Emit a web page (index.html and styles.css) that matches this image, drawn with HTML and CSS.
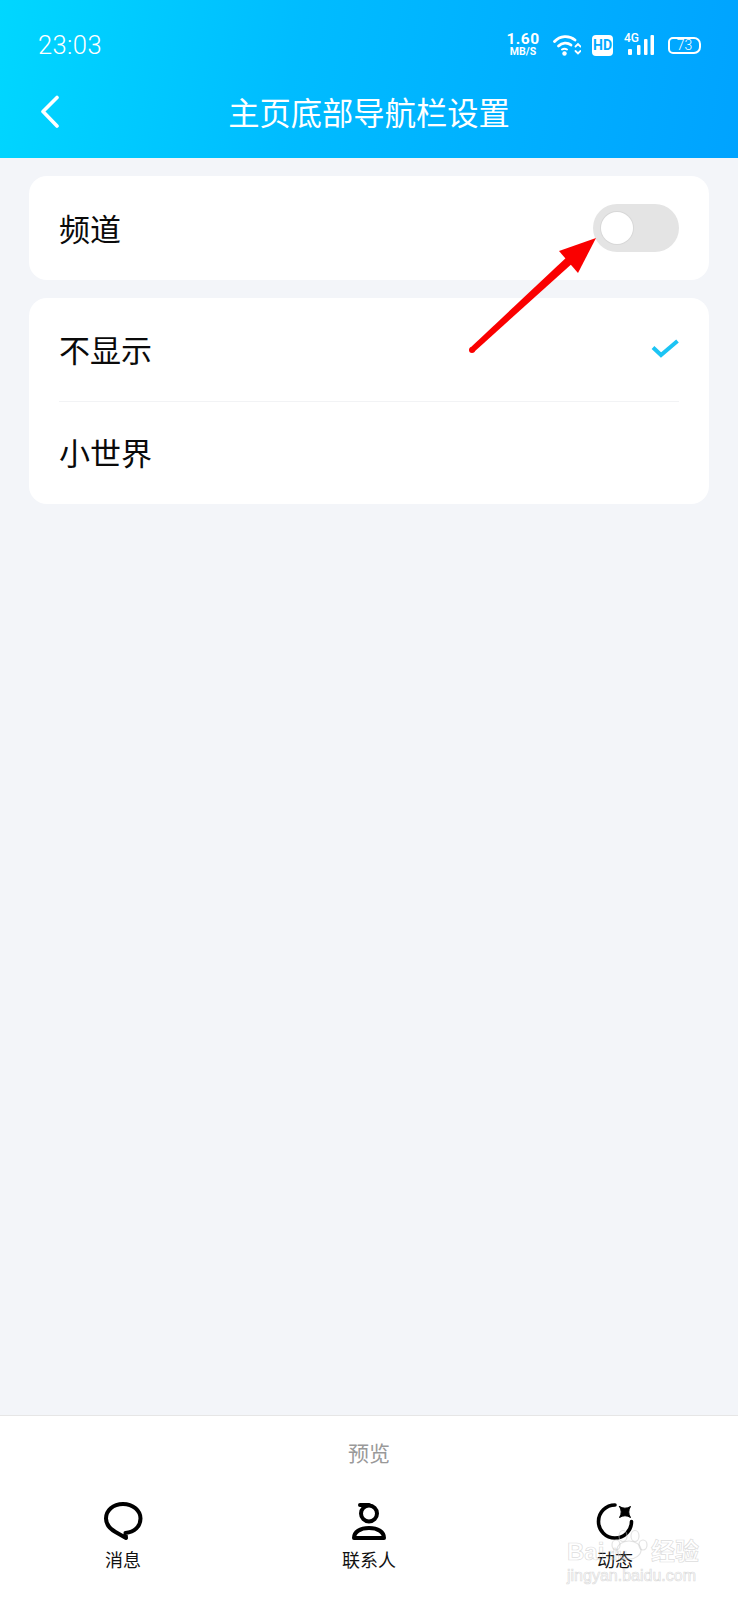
FILE: index.html
```html
<!DOCTYPE html>
<html lang="zh">
<head>
<meta charset="utf-8">
<title>主页底部导航栏设置</title>
<link rel="stylesheet" href="styles.css">
</head>
<body>
<div class="page">
  <header class="top">
    <div class="status">
      <span class="time">23:03</span>
      <div class="status-icons">
        <div class="speed"><span class="speed-num">1.60</span><span class="speed-unit">MB/S</span></div>
        <svg class="wifi" width="28" height="22" viewBox="0 0 28 22" fill="none" stroke="#fff" stroke-width="2.800" stroke-linecap="round"><path d="M1.500 7.500C7 1.500 16 1 22 6"/><path d="M5.500 12C9 8.500 14.500 8 18 11"/><path d="M9 15.500c1.500-1 3.500-1 5 0" stroke-width="2"/><circle cx="11.500" cy="19.500" r="2.200" fill="#fff" stroke="none"/><path d="M22.500 12.500l2.500-2.500 2.500 2.500M22.500 17l2.500 2.500 2.500-2.500" stroke-width="1.800"/></svg>
        <span class="hd">HD</span>
        <div class="signal">
          <span class="net">4G</span>
          <svg width="30" height="22" viewBox="0 0 30 22" fill="#fff"><rect x="4" y="15" width="4" height="6" rx="1"/><rect x="13" y="11" width="3.500" height="10" rx="1"/><rect x="20" y="5" width="3.500" height="16" rx="1"/><rect x="26.500" y="1" width="3.500" height="20" rx="1"/></svg>
        </div>
        <div class="battery"><span class="battery-num">73</span></div>
      </div>
    </div>
    <div class="nav">
      <svg class="back" width="24" height="34" viewBox="0 0 24 34" fill="none" stroke="#fff" stroke-width="3.600" stroke-linecap="round" stroke-linejoin="round"><path d="M19 2.500 5 16.500 19 31"/></svg>
      <h1 class="title">主页底部导航栏设置</h1>
    </div>
  </header>

  <main class="content">
    <section class="card">
      <div class="row row-first">
        <span class="label">频道</span>
        <span class="toggle"><span class="thumb"></span></span>
      </div>
    </section>
    <section class="card">
      <div class="row row-line">
        <span class="label">不显示</span>
        <svg class="check" width="30" height="20" viewBox="0 0 30 20" fill="none" stroke="#1cc4f4" stroke-width="4"><path d="M4 8.500 12 16 28.500 2"/></svg>
      </div>
      <div class="row row-last">
        <span class="label">小世界</span>
      </div>
    </section>
  </main>

  <footer class="bottom">
    <div class="preview">预览</div>
    <div class="tabs">
      <div class="tab">
        <svg width="42" height="40" viewBox="0 0 42 40" fill="none" stroke="#000" stroke-width="4" stroke-linejoin="round" stroke-linecap="round"><path d="M21 3C11 3 4 9.500 4 17.500c0 7 5 11 9.500 13.500l10.500 6-.5-5C32.500 31 38.500 25.500 38.500 17.500 38.500 9.500 31 3 21 3Z"/></svg>
        <span class="tab-label">消息</span>
      </div>
      <div class="tab">
        <svg width="36" height="40" viewBox="0 0 36 40" fill="none" stroke="#000" stroke-width="4"><path d="M9 4h9" stroke-linecap="round"/><circle cx="18" cy="12.500" r="8"/><path d="M3 37c0-6 6-10 15-10s15 4 15 10Z" stroke-linejoin="round"/></svg>
        <span class="tab-label">联系人</span>
      </div>
      <div class="tab">
        <svg width="40" height="40" viewBox="0 0 40 40" fill="none" stroke="#000" stroke-linecap="round"><path d="M20 4A16.500 16.500 0 1 0 36.500 20.500" stroke-width="3.600"/><path d="M24.500 5.500Q30 9 35.500 5.500 32 11 35.500 16.500 30 13 24.500 16.500 28 11 24.500 5.500Z" fill="#000" stroke-width="1" stroke-linejoin="round"/></svg>
        <span class="tab-label">动态</span>
      </div>
    </div>
    <div class="watermark">
      <svg class="paw" width="44" height="32" viewBox="0 0 44 32" fill="none" stroke="#c8c8c8" stroke-opacity=".5" stroke-width="1.200"><ellipse cx="22" cy="21" rx="12" ry="9"/><ellipse cx="9" cy="16" rx="4" ry="5"/><ellipse cx="16" cy="7" rx="4" ry="5.500"/><ellipse cx="28" cy="7" rx="4" ry="5.500"/><ellipse cx="36" cy="16" rx="4" ry="5"/></svg>
      <div class="wm-main"><span class="wm-bai">Bai<span class="wm-du">du</span></span><span>经验</span></div>
      <div class="wm-url">jingyan.baidu.com</div>
    </div>
  </footer>

  <svg class="arrow" width="738" height="400" viewBox="0 0 738 400"><circle cx="472" cy="350" r="3" fill="#fa0000"/><path d="M470 348 569 255 575 261 474 352Z" fill="#fa0000"/><path d="M596 238 559 251 578 273Z" fill="#fa0000"/></svg>
</div>
</body>
</html>
```

FILE: styles.css
```css
* { box-sizing: border-box; }
html, body { margin: 0; padding: 0; }
body {
  font-family: "Noto Sans CJK SC", "Noto Sans", sans-serif;
  background: #f3f5f9;
}
.page {
  position: relative;
  width: 738px;
  height: 1600px;
  display: flex;
  flex-direction: column;
  overflow: hidden;
}
.top {
  height: 158px;
  flex: none;
  background: linear-gradient(100deg, #00d7ff 0%, #00bcff 40%, #00a3ff 100%);
  color: #fff;
}
.status {
  height: 90px;
  padding: 0 37px 0 38px;
  display: flex;
  align-items: center;
  justify-content: space-between;
}
.time {
  font-family: Roboto, sans-serif;
  font-size: 25.500px;
  letter-spacing: .4px;
  font-weight: 300;
}
.status-icons { display: flex; align-items: center; }
.speed { display: flex; flex-direction: column; align-items: center; width: 34px; font-family: Roboto, sans-serif; font-weight: 700; margin-right: 13px; }
.speed-num { font-size: 15.500px; line-height: 14px; letter-spacing: .5px; }
.speed-unit { font-size: 10.500px; line-height: 12px; }
.wifi { margin-right: 11px; }
.hd {
  width: 21px; height: 21px;
  background: #fff;
  color: #00a9ff;
  border-radius: 4px;
  font: 700 14px/21px Roboto, sans-serif;
  text-align: center;
  margin-right: 11px;
}
.signal { position: relative; width: 30px; height: 24px; margin-right: 14px; }
.signal svg { position: absolute; left: 0; top: 1px; }
.net { position: absolute; left: 0; top: -1px; font: 500 12px/13px Roboto, sans-serif; }
.battery {
  width: 33px; height: 17px;
  border: 2px solid #fff;
  border-radius: 5px 7px 7px 5px;
  display: flex; align-items: center; justify-content: center;
}
.battery-num { font: 300 14px/13px Roboto, sans-serif; }
.nav {
  position: relative;
  height: 68px;
  display: flex;
  align-items: center;
  justify-content: center;
  padding-bottom: 24px;
}
.back { position: absolute; left: 38px; top: 5px; }
.title {
  margin: 0;
  font-size: 31.300px;
  font-weight: 400;
  line-height: 44px;
}
.content {
  flex: 1;
  padding: 18px 29px 0;
  display: flex;
  flex-direction: column;
  gap: 18px;
}
.card {
  background: #fff;
  border-radius: 18px;
  padding: 0 30px;
}
.row {
  height: 102px;
  display: flex;
  align-items: center;
  justify-content: space-between;
}
.row-first { height: 104px; }
.row-line { height: 104px; padding-bottom: 2px; border-bottom: 1px solid #f2f3f5; }
.row-last { padding-bottom: 3px; }
.label { font-size: 31px; line-height: 44px; color: #0a0a0a; }
.toggle {
  width: 86px; height: 48px;
  background: #e4e4e4;
  border-radius: 24px;
  padding: 8px;
  display: flex;
}
.thumb {
  width: 32px; height: 32px;
  background: #fff;
  border-radius: 50%;
  box-shadow: 0 0 0 1px #d8d8d8;
}
.bottom {
  position: relative;
  height: 185px;
  flex: none;
  background: #fff;
  border-top: 1px solid #e6e6e6;
}
.preview {
  text-align: center;
  font-size: 21px;
  line-height: 30px;
  color: #999;
  margin-top: 21px;
}
.tabs {
  display: grid;
  grid-template-columns: repeat(3, 1fr);
  margin-top: 34px;
}
.tab {
  display: flex;
  flex-direction: column;
  align-items: center;
  gap: 5px;
  color: #111;
}
.tab-label { font-size: 18px; line-height: 26px; }
.watermark {
  position: absolute;
  left: 567px;
  top: 112px;
  width: 132px;
  height: 70px;
  color: transparent;
  -webkit-text-stroke: .7px rgba(190, 190, 190, .55);
}
.paw { position: absolute; left: 40px; top: 1px; }
.wm-main {
  position: absolute;
  left: 0;
  top: 10px;
  width: 132px;
  display: flex;
  justify-content: space-between;
  font: 700 24px/28px "Liberation Sans", "Noto Sans CJK SC", sans-serif;
  white-space: nowrap;
}
.wm-du { font-size: 16px; margin-left: 3px; }
.wm-url {
  position: absolute;
  left: 0;
  top: 38px;
  font: 400 16px/20px "Liberation Sans", sans-serif;
  white-space: nowrap;
}
.arrow { position: absolute; left: 0; top: 0; pointer-events: none; }
```
